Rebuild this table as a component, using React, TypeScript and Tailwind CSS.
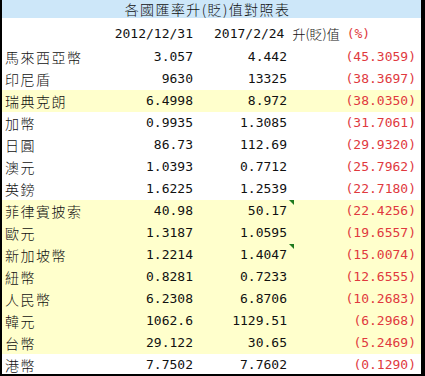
import React from 'react';

type Row = { name: string; a: string; b: string; pct: string; hl?: boolean; mark?: boolean };

const rows: Row[] = [
  { name: '馬來西亞幣', a: '3.057', b: '4.442', pct: '(45.3059)' },
  { name: '印尼盾', a: '9630', b: '13325', pct: '(38.3697)' },
  { name: '瑞典克朗', a: '6.4998', b: '8.972', pct: '(38.0350)', hl: true },
  { name: '加幣', a: '0.9935', b: '1.3085', pct: '(31.7061)' },
  { name: '日圓', a: '86.73', b: '112.69', pct: '(29.9320)' },
  { name: '澳元', a: '1.0393', b: '0.7712', pct: '(25.7962)' },
  { name: '英鎊', a: '1.6225', b: '1.2539', pct: '(22.7180)' },
  { name: '菲律賓披索', a: '40.98', b: '50.17', pct: '(22.4256)', hl: true, mark: true },
  { name: '歐元', a: '1.3187', b: '1.0595', pct: '(19.6557)', hl: true },
  { name: '新加坡幣', a: '1.2214', b: '1.4047', pct: '(15.0074)', hl: true, mark: true },
  { name: '紐幣', a: '0.8281', b: '0.7233', pct: '(12.6555)', hl: true },
  { name: '人民幣', a: '6.2308', b: '6.8706', pct: '(10.2683)', hl: true },
  { name: '韓元', a: '1062.6', b: '1129.51', pct: '(6.2968)', hl: true },
  { name: '台幣', a: '29.122', b: '30.65', pct: '(5.2469)', hl: true },
  { name: '港幣', a: '7.7502', b: '7.7602', pct: '(0.1290)' },
];

const cjk = "font-['Noto_Sans_CJK_TC','Noto_Sans_CJK_SC',sans-serif] font-light";
const mono = "font-['DejaVu_Sans_Mono','Liberation_Mono',monospace]";

const Mark: React.FC = () => (
  <svg className="absolute right-0 top-0" width="5" height="5" viewBox="0 0 5 5">
    <polygon points="0,0 5,0 5,5" fill="#1e7a1e" />
  </svg>
);

export default function App() {
  return (
    <div className="w-[425px] h-[376px] bg-white border-l-2 border-r-4 border-b-2 border-black flex flex-col overflow-hidden text-[#111]">
      <div className={`h-[18px] shrink-0 bg-[#cde7f9] flex items-center justify-center pr-[8px] text-[14px] leading-[18px] tracking-[1.4px] ${cjk}`}>
        各國匯率升(貶)值對照表
      </div>
      <div className="h-[28px] shrink-0 flex items-center pt-[4px]">
        <div className="w-[108px]" />
        <div className={`w-[88px] pr-[5px] text-right text-[13px] ${mono}`}>2012/12/31</div>
        <div className="flex-1 flex items-center pl-[16px]">
          <span className={`text-[13px] ${mono}`}>2017/2/24</span>
          <span className={`ml-[8px] text-[13px] ${cjk}`}>升(貶)值</span>
          <span className={`ml-[7px] text-[13px] text-[#e0393e] ${mono}`}>(%)</span>
        </div>
      </div>
      {rows.map((r) => (
        <div key={r.name} className={`h-[22px] flex items-center shrink-0 ${r.hl ? 'bg-[#ffffcc]' : ''}`}>
          <div className={`w-[108px] pl-[3px] text-[14px] tracking-[1.5px] leading-none ${cjk}`}>{r.name}</div>
          <div className={`w-[88px] pr-[5px] text-right text-[13px] ${mono}`}>{r.a}</div>
          <div className={`relative w-[96px] h-full flex items-center justify-end pr-[7px] text-[13px] ${mono}`}>
            {r.b}
            {r.mark && <Mark />}
          </div>
          <div className={`flex-1 pr-[5px] text-right text-[13px] text-[#e0393e] ${mono}`}>{r.pct}</div>
        </div>
      ))}
    </div>
  );
}
